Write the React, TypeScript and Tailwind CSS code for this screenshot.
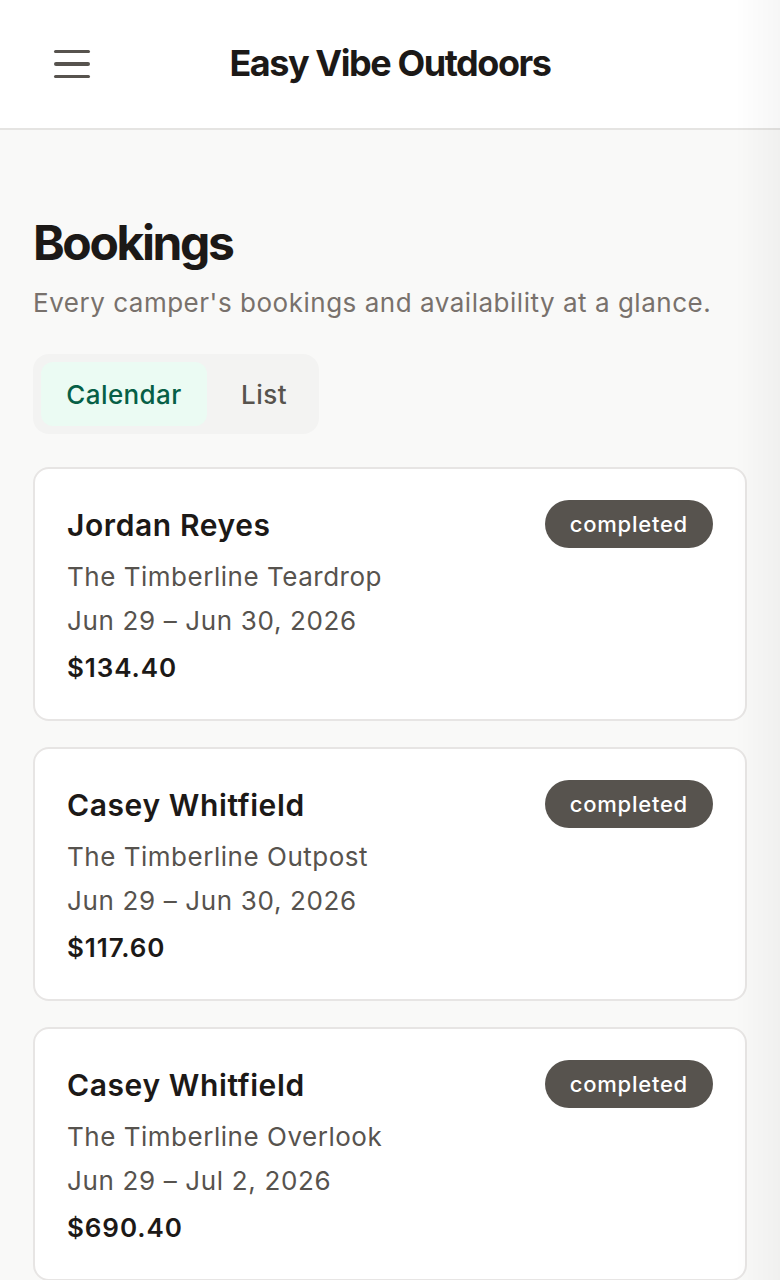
import React from "react";

const bookings = [
  { name: "Jordan Reyes", site: "The Timberline Teardrop", dates: "Jun 29 – Jun 30, 2026", price: "$134.40" },
  { name: "Casey Whitfield", site: "The Timberline Outpost", dates: "Jun 29 – Jun 30, 2026", price: "$117.60" },
  { name: "Casey Whitfield", site: "The Timberline Overlook", dates: "Jun 29 – Jul 2, 2026", price: "$690.40" },
];

export default function App() {
  return (
    <div
      className="min-h-screen bg-[#f9f9f8] text-[#1c1917]"
      style={{ fontFamily: "Inter, 'Noto Sans', 'Liberation Sans', sans-serif" }}
    >
      <header className="h-[130px] bg-white border-b-2 border-[#e5e4e2] flex items-center px-[54px] relative">
        <button className="w-[36px] h-[36px] flex flex-col justify-center gap-[9px]">
          <span className="block h-[3.5px] w-[36px] rounded-full bg-[#57534e]" />
          <span className="block h-[3.5px] w-[36px] rounded-full bg-[#57534e]" />
          <span className="block h-[3.5px] w-[36px] rounded-full bg-[#57534e]" />
        </button>
        <div className="flex-1 flex justify-center pr-[36px]">
          <h1 className="text-[36px] font-bold tracking-[-0.04em] text-[#1c1917] leading-none pb-[2px]">
            Easy Vibe Outdoors
          </h1>
        </div>
      </header>

      <main className="px-[33px] pt-[85px]">
        <h2 className="text-[48px] leading-[56px] font-bold tracking-[-0.05em] text-[#1c1917]">Bookings</h2>
        <p className="mt-[12px] text-[26px] leading-[39px] tracking-[0.02em] text-[#78716c]">
          Every camper's bookings and availability at a glance.
        </p>

        <div className="mt-[32px] inline-flex rounded-[16px] bg-[#f3f3f2] p-[8px]">
          <button className="h-[64px] w-[166px] rounded-[12px] bg-[#ebfbf3] text-[26px] tracking-[0.015em] font-medium text-[#065f46]">
            Calendar
          </button>
          <button className="h-[64px] w-[104px] pl-[10px] rounded-[12px] text-[26px] tracking-[0.02em] font-medium text-[#57534e]">
            List
          </button>
        </div>

        <div className="mt-[33px] flex flex-col gap-[26px] pb-[40px]">
          {bookings.map((b, i) => (
            <div
              key={i}
              className="rounded-[16px] border-2 border-[#e7e5e4] bg-white px-[32px] pt-[32px] pb-[32px] flex items-start justify-between"
            >
              <div>
                <div className="text-[30px] leading-[48px] font-semibold text-[#1c1917] tracking-[0.02em]">{b.name}</div>
                <div className="mt-[8px] text-[26px] leading-[40px] tracking-[0.02em] text-[#57534e]">{b.site}</div>
                <div className="mt-[4px] text-[26px] leading-[40px] tracking-[0.025em] text-[#57534e]">{b.dates}</div>
                <div className="mt-[8px] text-[26px] leading-[38px] tracking-[0.035em] font-semibold text-[#1c1917]">{b.price}</div>
              </div>
              <span className="mt-[-1px] h-[48px] px-[25px] rounded-full bg-[#57534e] text-white text-[22px] tracking-[0.035em] font-medium flex items-center">
                completed
              </span>
            </div>
          ))}
        </div>
      </main>

      <div className="pointer-events-none fixed right-0 top-0 h-full w-[44px] bg-gradient-to-r from-transparent to-[rgba(0,0,0,0.035)]" />
    </div>
  );
}
